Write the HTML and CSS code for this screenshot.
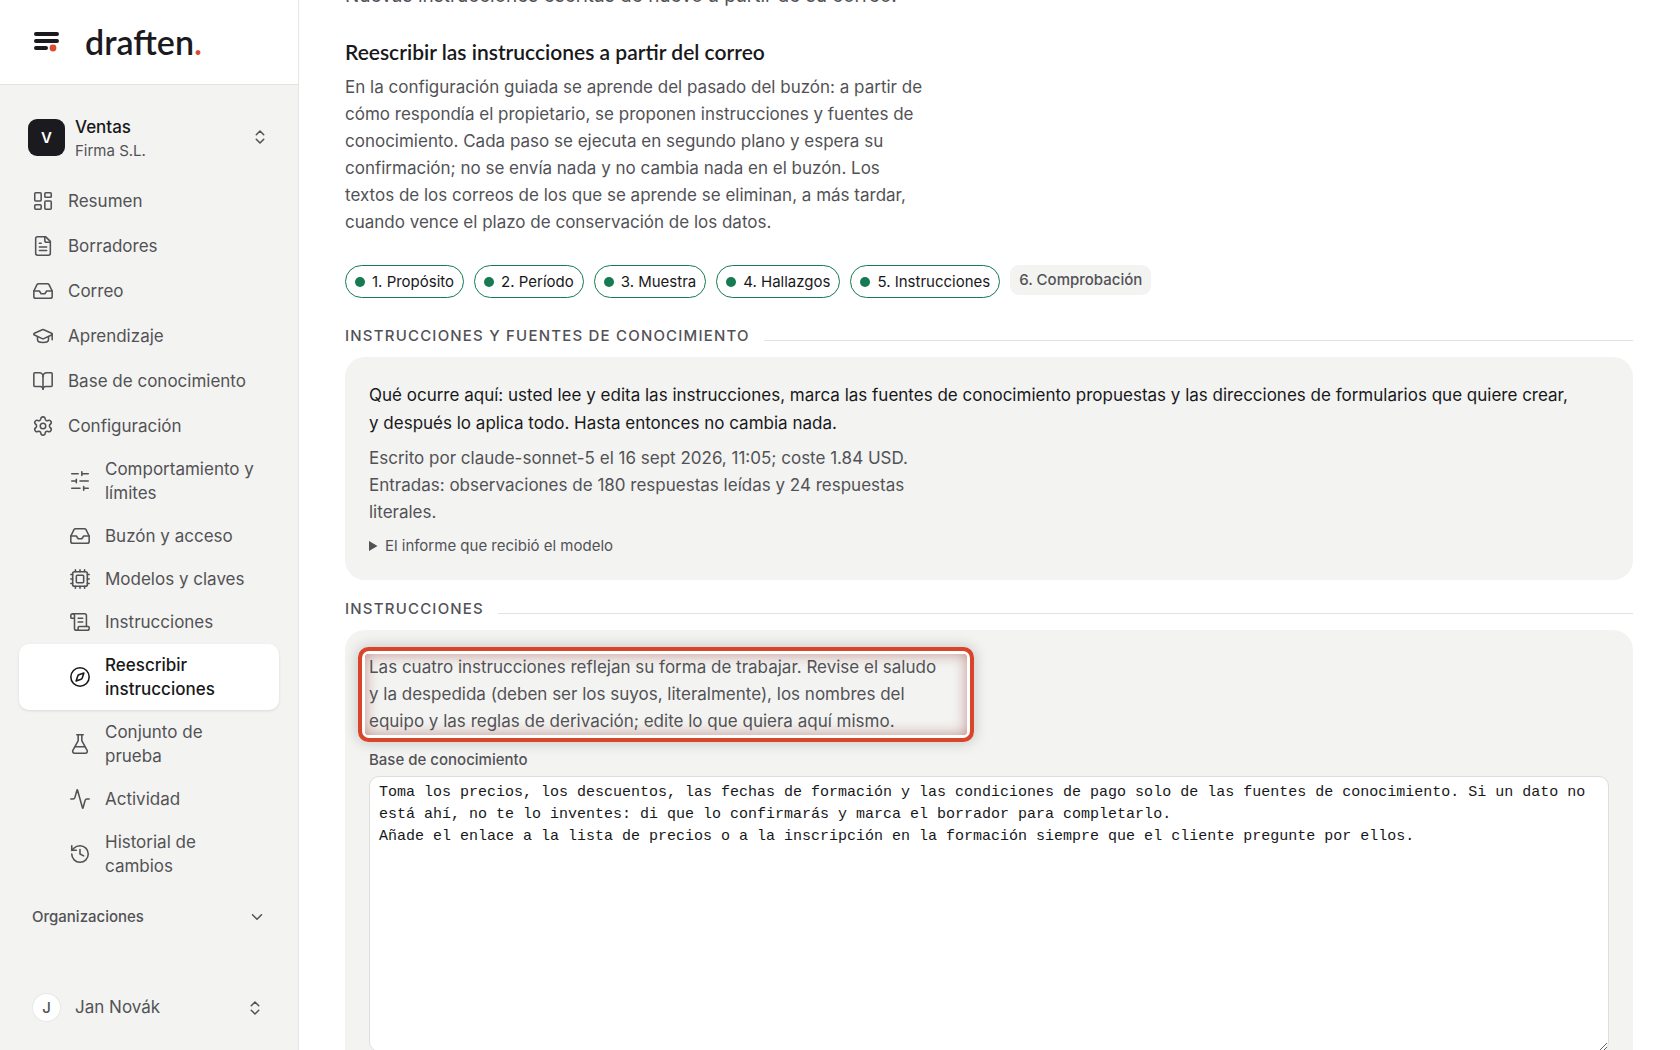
FILE: index.html
```
<!DOCTYPE html>
<html lang="es">
<head>
  <meta charset="UTF-8" />
  <meta name="viewport" content="width=device-width, initial-scale=1.0" />
  <title>draften - Reescribir instrucciones</title>
  <link rel="stylesheet" href="styles.css">
</head>
<body>
  <div class="app">
    <!-- Sidebar -->
    <aside class="sidebar">
      <div class="brand">
        <svg class="brand-mark" viewBox="0 0 26 20" aria-hidden="true">
          <path d="M2 2h21M2 9h21M2 16h10" fill="none" stroke="#1b1b1f" stroke-width="4" stroke-linecap="round"/>
          <circle cx="19" cy="16" r="3.4" fill="#dc4a2f"/>
        </svg>
        <a class="brand-name" href="#">draften<span class="brand-dot">.</span></a>
      </div>

      <button class="workspace" type="button">
        <span class="workspace-tile">V</span>
        <span class="workspace-text">
          <span class="workspace-name">Ventas</span>
          <span class="workspace-org">Firma S.L.</span>
        </span>
        <svg class="icon small" viewBox="0 0 24 24"><path d="m7 15 5 5 5-5"/><path d="m7 9 5-5 5 5"/></svg>
      </button>

      <nav class="nav">
        <a href="#">
          <svg class="icon" viewBox="0 0 24 24"><rect x="3" y="3" width="7" height="9" rx="1"/><rect x="14" y="3" width="7" height="5" rx="1"/><rect x="14" y="12" width="7" height="9" rx="1"/><rect x="3" y="16" width="7" height="5" rx="1"/></svg>
          Resumen
        </a>
        <a href="#">
          <svg class="icon" viewBox="0 0 24 24"><path d="M15 2H6a2 2 0 0 0-2 2v16a2 2 0 0 0 2 2h12a2 2 0 0 0 2-2V7Z"/><path d="M14 2v4a2 2 0 0 0 2 2h4"/><path d="M10 9H8"/><path d="M16 13H8"/><path d="M16 17H8"/></svg>
          Borradores
        </a>
        <a href="#">
          <svg class="icon" viewBox="0 0 24 24"><path d="M22 12h-6l-2 3h-4l-2-3H2"/><path d="M5.45 5.11 2 12v6a2 2 0 0 0 2 2h16a2 2 0 0 0 2-2v-6l-3.45-6.89A2 2 0 0 0 16.76 4H7.24a2 2 0 0 0-1.79 1.11z"/></svg>
          Correo
        </a>
        <a href="#">
          <svg class="icon" viewBox="0 0 24 24"><path d="M21.42 10.922a1 1 0 0 0-.019-1.838L12.83 5.18a2 2 0 0 0-1.66 0L2.6 9.08a1 1 0 0 0 0 1.832l8.57 3.908a2 2 0 0 0 1.66 0z"/><path d="M22 10v6"/><path d="M6 12.5V16a6 3 0 0 0 12 0v-3.5"/></svg>
          Aprendizaje
        </a>
        <a href="#">
          <svg class="icon" viewBox="0 0 24 24"><path d="M12 7v14"/><path d="M3 18a1 1 0 0 1-1-1V4a1 1 0 0 1 1-1h5a4 4 0 0 1 4 4 4 4 0 0 1 4-4h5a1 1 0 0 1 1 1v13a1 1 0 0 1-1 1h-6a3 3 0 0 0-3 3 3 3 0 0 0-3-3z"/></svg>
          Base de conocimiento
        </a>
        <a href="#">
          <svg class="icon" viewBox="0 0 24 24"><path d="M9.671 4.136a2.34 2.34 0 0 1 4.659 0 2.34 2.34 0 0 0 3.319 1.915 2.34 2.34 0 0 1 2.33 4.033 2.34 2.34 0 0 0 0 3.831 2.34 2.34 0 0 1-2.33 4.033 2.34 2.34 0 0 0-3.319 1.915 2.34 2.34 0 0 1-4.659 0 2.34 2.34 0 0 0-3.32-1.915 2.34 2.34 0 0 1-2.33-4.033 2.34 2.34 0 0 0 0-3.831A2.34 2.34 0 0 1 6.35 6.051a2.34 2.34 0 0 0 3.319-1.915"/><circle cx="12" cy="12" r="3"/></svg>
          Configuración
        </a>
      </nav>

      <nav class="nav subnav">
        <a href="#">
          <svg class="icon" viewBox="0 0 24 24"><path d="M21 4h-7M10 4H3M21 12h-9M8 12H3M21 20h-5M12 20H3M14 2v4M8 10v4M16 18v4"/></svg>
          Comportamiento y límites
        </a>
        <a href="#">
          <svg class="icon" viewBox="0 0 24 24"><path d="M22 12h-6l-2 3h-4l-2-3H2"/><path d="M5.45 5.11 2 12v6a2 2 0 0 0 2 2h16a2 2 0 0 0 2-2v-6l-3.45-6.89A2 2 0 0 0 16.76 4H7.24a2 2 0 0 0-1.79 1.11z"/></svg>
          Buzón y acceso
        </a>
        <a href="#">
          <svg class="icon" viewBox="0 0 24 24"><rect x="4" y="4" width="16" height="16" rx="2"/><rect x="8" y="8" width="8" height="8" rx="1"/><path d="M12 20v2M12 2v2M17 20v2M17 2v2M2 12h2M2 17h2M2 7h2M20 12h2M20 17h2M20 7h2M7 20v2M7 2v2"/></svg>
          Modelos y claves
        </a>
        <a href="#">
          <svg class="icon" viewBox="0 0 24 24"><path d="M15 12h-5"/><path d="M15 8h-5"/><path d="M19 17V5a2 2 0 0 0-2-2H4"/><path d="M8 21h12a2 2 0 0 0 2-2v-1a1 1 0 0 0-1-1H11a1 1 0 0 0-1 1v1a2 2 0 1 1-4 0V5a2 2 0 1 0-4 0v2a1 1 0 0 0 1 1h3"/></svg>
          Instrucciones
        </a>
        <a href="#" class="active">
          <svg class="icon" viewBox="0 0 24 24"><circle cx="12" cy="12" r="10"/><path d="m16.24 7.76-1.804 5.411a2 2 0 0 1-1.265 1.265L7.76 16.24l1.804-5.411a2 2 0 0 1 1.265-1.265z"/></svg>
          Reescribir instrucciones
        </a>
        <a href="#">
          <svg class="icon" viewBox="0 0 24 24"><path d="M14 2v6a2 2 0 0 0 .245.96l5.51 10.08A2 2 0 0 1 18 22H6a2 2 0 0 1-1.755-2.96l5.51-10.08A2 2 0 0 0 10 8V2"/><path d="M6.453 15h11.094"/><path d="M8.5 2h7"/></svg>
          Conjunto de prueba
        </a>
        <a href="#">
          <svg class="icon" viewBox="0 0 24 24"><path d="M22 12h-2.48a2 2 0 0 0-1.93 1.46l-2.35 8.36a.25.25 0 0 1-.48 0L9.24 2.18a.25.25 0 0 0-.48 0l-2.35 8.36A2 2 0 0 1 4.49 12H2"/></svg>
          Actividad
        </a>
        <a href="#">
          <svg class="icon" viewBox="0 0 24 24"><path d="M3 12a9 9 0 1 0 9-9 9.75 9.75 0 0 0-6.74 2.74L3 8"/><path d="M3 3v5h5"/><path d="M12 7v5l4 2"/></svg>
          Historial de cambios
        </a>
      </nav>

      <button class="orgs" type="button">
        Organizaciones
        <svg class="icon small" viewBox="0 0 24 24"><path d="m6 9 6 6 6-6"/></svg>
      </button>

      <button class="account" type="button">
        <span class="avatar">J</span>
        <span class="account-name">Jan Novák</span>
        <svg class="icon small" viewBox="0 0 24 24"><path d="m7 15 5 5 5-5"/><path d="m7 9 5-5 5 5"/></svg>
      </button>
    </aside>

    <!-- Content -->
    <main class="content">
      <p class="lead">Nuevas instrucciones escritas de nuevo a partir de su correo.</p>

      <h1>Reescribir las instrucciones a partir del correo</h1>
      <p class="note">En la configuración guiada se aprende del pasado del buzón: a partir de cómo respondía el propietario, se proponen instrucciones y fuentes de conocimiento. Cada paso se ejecuta en segundo plano y espera su confirmación; no se envía nada y no cambia nada en el buzón. Los textos de los correos de los que se aprende se eliminan, a más tardar, cuando vence el plazo de conservación de los datos.</p>

      <div class="steps">
        <a class="step done" href="#">1. Propósito</a>
        <a class="step done" href="#">2. Período</a>
        <a class="step done" href="#">3. Muestra</a>
        <a class="step done" href="#">4. Hallazgos</a>
        <a class="step done" href="#">5. Instrucciones</a>
        <span class="step">6. Comprobación</span>
      </div>

      <h2>Instrucciones y fuentes de conocimiento</h2>
      <section class="card">
        <p class="intro">Qué ocurre aquí: usted lee y edita las instrucciones, marca las fuentes de conocimiento propuestas y las direcciones de formularios que quiere crear, y&nbsp;después lo aplica todo. Hasta entonces no cambia nada.</p>
        <p class="note">Escrito por claude-sonnet-5 el 16 sept 2026, 11:05; coste 1.84 USD. Entradas: observaciones de 180 respuestas leídas y 24 respuestas literales.</p>
        <details>
          <summary>El informe que recibió el modelo</summary>
        </details>
      </section>

      <h2>Instrucciones</h2>
      <section class="card">
        <p class="note highlight">Las cuatro instrucciones reflejan su forma de trabajar. Revise el saludo y&nbsp;la&nbsp;despedida (deben ser los suyos, literalmente), los nombres del equipo y las reglas de derivación; edite lo que quiera aquí mismo.</p>
        <label for="base">Base de conocimiento</label>
        <textarea id="base" rows="12" spellcheck="false">Toma los precios, los descuentos, las fechas de formación y las condiciones de pago solo de las fuentes de conocimiento. Si un dato no está ahí, no te lo inventes: di que lo confirmarás y marca el borrador para completarlo.
Añade el enlace a la lista de precios o a la inscripción en la formación siempre que el cliente pregunte por ellos.</textarea>
      </section>
    </main>
  </div>
</body>
</html>
```
FILE: styles.css
```
/* Global */
* {
  box-sizing: border-box;
}
body {
  margin: 0;
  font-family: Inter, 'Liberation Sans', sans-serif;
  font-size: 17px;
  line-height: 27px;
  color: #18181b;
  background: #fff;
}
a {
  color: inherit;
  text-decoration: none;
}
button {
  font: inherit;
  color: inherit;
  text-align: left;
  background: none;
  border: none;
  cursor: pointer;
}
p, h1, h2 {
  margin: 0;
}
.app {
  display: flex;
  height: 100vh;
  overflow: hidden;
}
.icon {
  width: 22px;
  height: 22px;
  flex-shrink: 0;
  fill: none;
  stroke: currentColor;
  stroke-width: 2;
  stroke-linecap: round;
  stroke-linejoin: round;
}
.icon.small {
  width: 18px;
  height: 18px;
}

/* Sidebar */
.sidebar {
  width: 299px;
  flex-shrink: 0;
  display: flex;
  flex-direction: column;
  background: #f3f3f1;
  border-right: 1px solid #e5e5e3;
  color: #525256;
}
.brand {
  display: flex;
  align-items: center;
  gap: 25px;
  height: 85px;
  flex-shrink: 0;
  padding-left: 34px;
  background: #fff;
  border-bottom: 1px solid #e2e2e0;
}
.brand-mark {
  width: 26px;
  height: 20px;
}
.brand-name {
  font-family: Lato, sans-serif;
  font-size: 34px;
  line-height: 40px;
  font-weight: 600;
  color: #1b1b1f;
}
.brand-dot {
  color: #dc4a2f;
}
.workspace {
  display: flex;
  align-items: center;
  gap: 10px;
  margin-top: 26px;
  padding: 0 29px 0 28px;
}
.workspace-tile {
  width: 37px;
  height: 37px;
  border-radius: 9px;
  background: #1b1b1f;
  color: #fff;
  font-size: 15px;
  font-weight: 600;
  line-height: 37px;
  text-align: center;
}
.workspace-text {
  flex: 1;
  display: flex;
  flex-direction: column;
  padding-top: 4px;
  line-height: 24px;
}
.workspace-name {
  color: #18181b;
  font-weight: 500;
}
.workspace-org {
  font-size: 15px;
}
.nav {
  display: flex;
  flex-direction: column;
  gap: 1px;
  margin-top: 16px;
  padding: 0 19px;
  line-height: 24px;
}
.nav a {
  display: flex;
  align-items: center;
  gap: 14px;
  padding: 10px 14px 10px 13px;
  border-radius: 10px;
}
.nav .icon {
  stroke-width: 1.7;
}
.subnav {
  margin-top: 0;
}
.subnav a {
  padding: 9px 24px 9px 50px;
}
.subnav .active {
  background: #fff;
  color: #18181b;
  font-weight: 500;
  box-shadow: 0 1px 3px rgba(0,0,0,0.1);
}
.orgs {
  display: flex;
  align-items: center;
  justify-content: space-between;
  margin-top: 7px;
  padding: 9px 32px;
  font-size: 15px;
  font-weight: 500;
}
.account {
  display: flex;
  align-items: center;
  gap: 15px;
  margin-top: auto;
  padding: 0 34px 29px 33px;
}
.avatar {
  width: 27px;
  height: 27px;
  border-radius: 50%;
  background: #fff;
  box-shadow: 0 0 0 1px #e8e8e6;
  font-size: 15px;
  font-weight: 500;
  text-align: center;
}
.account-name {
  flex: 1;
}

/* Content */
.content {
  flex: 1;
  min-width: 0;
  padding: 0 47px 0 46px;
  overflow: hidden;
}
.lead {
  margin-top: -18px;
  font-size: 19px;
  color: #525256;
}
h1 {
  margin: 29px 0 9px;
  font-family: Lato, sans-serif;
  font-size: 21px;
  line-height: 27px;
  font-weight: 600;
}
.note {
  max-width: 586px;
  color: #525256;
}
.steps {
  display: flex;
  flex-wrap: wrap;
  align-items: flex-start;
  gap: 10px;
  margin-top: 29px;
}
.step {
  padding: 3px 9px;
  border-radius: 9px;
  background: #f3f3f1;
  color: #525256;
  font-size: 15px;
  line-height: 24px;
  font-weight: 500;
}
.step.done {
  display: flex;
  align-items: center;
  gap: 7px;
  border: 1px solid #167a52;
  border-radius: 17px;
  background: #fff;
  color: #18181b;
  font-weight: 400;
  line-height: 25px;
}
.step.done::before {
  content: '';
  width: 10px;
  height: 10px;
  border-radius: 50%;
  background: #167a52;
}
h2 {
  display: flex;
  align-items: center;
  gap: 14px;
  margin: 26px 0 9px;
  font-size: 15px;
  line-height: 24px;
  font-weight: 500;
  letter-spacing: 0.08em;
  text-transform: uppercase;
  color: #525256;
}
h2::after {
  content: '';
  flex: 1;
  margin-top: 9px;
  border-top: 1px solid #e2e2e0;
}
.card {
  padding: 24px 24px 22px;
  border-radius: 20px;
  background: #f3f3f1;
}
.card + h2 {
  margin-top: 17px;
}
.intro {
  margin-bottom: 8px;
  line-height: 28px;
}
details {
  margin-top: 8px;
  font-size: 15px;
  line-height: 24px;
  color: #525256;
}
.highlight {
  max-width: 602px;
  margin-left: -4px;
  padding: 0 14px 0 4px;
  border-radius: 4px;
  box-shadow:
    inset 0 0 14px rgba(140,50,40,0.5),
    0 0 0 3px #fff,
    0 0 0 7px #d9452b,
    0 0 14px 8px rgba(0,0,0,0.18);
}
label {
  display: block;
  margin-top: 13px;
  font-size: 15px;
  line-height: 24px;
  font-weight: 500;
  color: #525256;
}
textarea {
  display: block;
  width: 100%;
  margin-top: 4px;
  padding: 5px 9px;
  border: 1px solid #dededc;
  border-radius: 10px;
  background: #fff;
  color: #18181b;
  font-family: 'Liberation Mono', monospace;
  font-size: 15px;
  line-height: 22px;
  resize: vertical;
}
```
